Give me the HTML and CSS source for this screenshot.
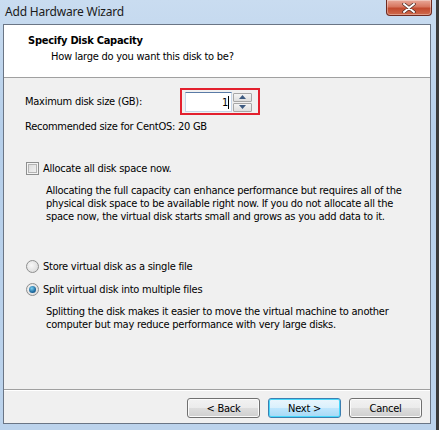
FILE: index.html
```html
<!DOCTYPE html>
<html>
<head>
<meta charset="utf-8">
<link rel="stylesheet" href="styles.css">
</head>
<body>
<div class="window">
  <div class="titlebar">
    <span class="title">Add Hardware Wizard</span>
    <div class="close"><svg width="16" height="10" viewBox="0 0 16 10"><path d="M3 1 L13 9 M13 1 L3 9" stroke="#4a2a24" stroke-width="3.4" stroke-linecap="round"/><path d="M3 1 L13 9 M13 1 L3 9" stroke="#fff" stroke-width="2" stroke-linecap="round"/></svg></div>
  </div>
  <div class="client">
    <div class="header">
      <div class="h-title">Specify Disk Capacity</div>
      <div class="h-sub">How large do you want this disk to be?</div>
    </div>
    <div class="content">
      <div class="size-row">
        <span class="label">Maximum disk size (GB):</span>
        <div class="highlight">
          <div class="spin">
            <div class="spin-input"><span>1</span><i class="caret"></i></div>
            <div class="spin-btns">
              <div class="sbtn"><svg width="7" height="4" viewBox="0 0 7 4"><path d="M0 4 L3.5 0 L7 4Z" fill="#3d5a80"/></svg></div>
              <div class="sbtn"><svg width="7" height="4" viewBox="0 0 7 4"><path d="M0 0 L3.5 4 L7 0Z" fill="#3d5a80"/></svg></div>
            </div>
          </div>
        </div>
      </div>
      <div class="rec">Recommended size for CentOS: 20 GB</div>
      <div class="opt check-opt"><span class="checkbox"></span><span>Allocate all disk space now.</span></div>
      <p class="desc">Allocating the full capacity can enhance performance but requires all of the physical disk space to be available right now. If you do not allocate all the space now, the virtual disk starts small and grows as you add data to it.</p>
      <div class="opt radio-opt first"><span class="radio"></span><span>Store virtual disk as a single file</span></div>
      <div class="opt radio-opt"><span class="radio on"></span><span>Split virtual disk into multiple files</span></div>
      <p class="desc">Splitting the disk makes it easier to move the virtual machine to another computer but may reduce performance with very large disks.</p>
    </div>
    <div class="footer">
      <button class="btn">&lt; Back</button>
      <button class="btn default">Next &gt;</button>
      <button class="btn">Cancel</button>
    </div>
  </div>
</div>
</body>
</html>
```

FILE: styles.css
```css
html, body {
  margin: 0;
  padding: 0;
}
body {
  width: 439px;
  height: 430px;
  background: #3a3a3a;
  overflow: hidden;
}
.window {
  width: 436px;
  height: 430px;
  background: linear-gradient(180deg, #c9dcf0 0%, #b6cfea 30%, #bcd3ec 100%);
  display: flex;
  flex-direction: column;
  box-sizing: border-box;
  padding: 0 5px 6px 3px;
}
.titlebar {
  height: 24px;
  display: flex;
  align-items: flex-start;
  justify-content: space-between;
  position: relative;
}
.title {
  font-family: "Noto Sans", sans-serif;
  font-size: 12px;
  color: #1a1a1a;
  margin-top: 3px;
  margin-left: 2px;
  letter-spacing: -0.2px;
}
.close {
  width: 46px;
  height: 16px;
  margin-right: -1px;
  border: 1px solid #6e2a20;
  border-top: none;
  border-radius: 0 0 4px 4px;
  box-sizing: border-box;
  background: linear-gradient(180deg, #e9a99a 0%, #d7765f 45%, #c24a2f 55%, #cf6a4c 100%);
  display: flex;
  align-items: center;
  justify-content: center;
  box-shadow: inset 0 0 0 1px rgba(255,255,255,0.35);
}
.client {
  flex: 1;
  background: #f0f0f0;
  border: 1px solid #6a7585;
  display: flex;
  flex-direction: column;
  font-family: "DejaVu Sans Condensed", "DejaVu Sans", sans-serif;
  font-size: 11px;
  letter-spacing: -0.25px;
  color: #000;
}
.header {
  background: #fff;
  height: 53px;
  border-bottom: 1px solid #a0a0a0;
  box-sizing: border-box;
  padding: 9px 0 0 24px;
}
.h-title {
  font-weight: bold;
  line-height: 13px;
}
.h-sub {
  margin-top: 3px;
  margin-left: 23px;
  line-height: 13px;
}
.content {
  flex: 1;
  padding: 9px 0 0 21px;
}
.size-row {
  display: flex;
  align-items: center;
  margin-top: 1px;
}
.label {
  width: 155px;
}
.highlight {
  border: 2px solid #e3202e;
  padding: 2px 6px 1px 3px;
}
.spin {
  display: flex;
  align-items: center;
  gap: 1px;
}
.spin-input {
  width: 47px;
  height: 20px;
  box-sizing: border-box;
  background: #fff;
  border: 1px solid #c5d5e8;
  border-top-color: #5a7ba6;
  display: flex;
  align-items: center;
  justify-content: flex-end;
  padding-right: 2px;
}
.caret {
  display: inline-block;
  width: 1px;
  height: 13px;
  background: #000;
}
.spin-btns {
  display: flex;
  flex-direction: column;
  gap: 1px;
}
.sbtn {
  width: 19px;
  height: 9px;
  box-sizing: border-box;
  border: 1px solid #a7a7a7;
  border-radius: 1px;
  background: linear-gradient(180deg, #f4f4f4, #dedede);
  display: flex;
  align-items: center;
  justify-content: center;
}
.rec {
  margin-top: 5px;
  line-height: 13px;
}
.opt {
  display: flex;
  align-items: center;
  gap: 4px;
  line-height: 13px;
}
.check-opt {
  margin-top: 29px;
  margin-left: 1px;
}
.checkbox {
  width: 13px;
  height: 13px;
  box-sizing: border-box;
  border: 1px solid #8e8f8f;
  background: linear-gradient(135deg, #d8d8d8, #f6f6f6);
  box-shadow: inset 0 0 0 1px #f4f4f4, inset 0 0 0 2px #b4b4b4;
}
.desc {
  margin: 9px 0 0 21px;
  line-height: 13px;
  width: 366px;
}
.radio-opt.first {
  margin-top: 37px;
}
.radio-opt {
  margin-top: 10px;
  margin-left: 1px;
}
.radio {
  width: 13px;
  height: 13px;
  box-sizing: border-box;
  border-radius: 50%;
  border: 1px solid #8e8f8f;
  background: radial-gradient(circle at 40% 40%, #f8f8f8, #d4d4d4);
  position: relative;
}
.radio.on::after {
  content: "";
  position: absolute;
  left: 2px;
  top: 2px;
  width: 7px;
  height: 7px;
  border-radius: 50%;
  background: radial-gradient(circle at 40% 35%, #7ad0f0, #1d6aa0 60%, #0c3f66);
}
.footer {
  height: 34px;
  border-top: 1px solid #a0a0a0;
  box-shadow: inset 0 1px 0 #fff;
  display: flex;
  justify-content: flex-end;
  align-items: flex-start;
  gap: 8px;
  padding: 8px 8px 0 0;
  box-sizing: border-box;
}
.btn {
  width: 73px;
  height: 20px;
  font-family: "DejaVu Sans Condensed", "DejaVu Sans", sans-serif;
  font-size: 11px;
  letter-spacing: -0.25px;
  color: #000;
  border: 1px solid #707070;
  border-radius: 3px;
  background: linear-gradient(180deg, #f2f2f2 0%, #ebebeb 50%, #dddddd 51%, #cfcfcf 100%);
  box-shadow: inset 0 0 0 1px #fbfbfb;
  padding: 0;
}
.btn.default {
  border-color: #3c7fb1;
  background: linear-gradient(180deg, #eaf6fd 0%, #d9f0fc 50%, #bee6fd 51%, #a7d9f5 100%);
  box-shadow: inset 0 0 0 1px #48d8fb;
}
```
